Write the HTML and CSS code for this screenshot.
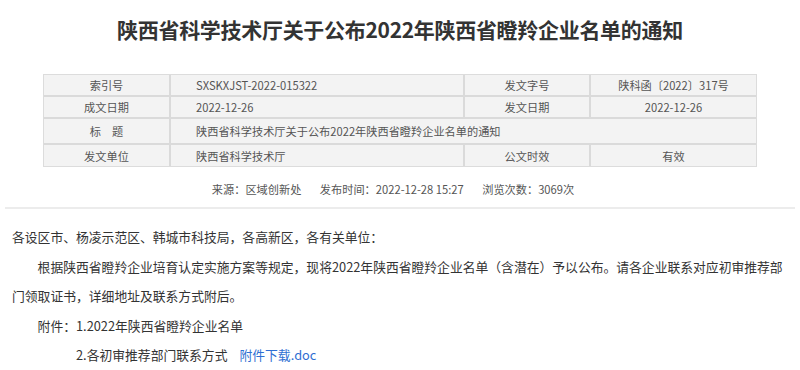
FILE: index.html
```html
<!DOCTYPE html>
<html lang="zh-CN">
<head>
<meta charset="utf-8">
<title>陕西省科学技术厅关于公布2022年陕西省瞪羚企业名单的通知</title>
<link rel="stylesheet" href="styles.css">
</head>
<body>
<div class="page">
  <h1 class="title">陕西省科学技术厅关于公布2022年陕西省瞪羚企业名单的通知</h1>
  <table class="info">
    <colgroup>
      <col class="k1">
      <col class="k2">
      <col class="k3">
      <col class="k4">
    </colgroup>
    <tr>
      <td class="label">索引号</td>
      <td class="value">SXSKXJST-2022-015322</td>
      <td class="label">发文字号</td>
      <td class="label">陕科函〔2022〕317号</td>
    </tr>
    <tr>
      <td class="label">成文日期</td>
      <td class="value">2022-12-26</td>
      <td class="label">发文日期</td>
      <td class="label">2022-12-26</td>
    </tr>
    <tr class="tall">
      <td class="label">标　题</td>
      <td class="value" colspan="3">陕西省科学技术厅关于公布2022年陕西省瞪羚企业名单的通知</td>
    </tr>
    <tr class="last">
      <td class="label">发文单位</td>
      <td class="value">陕西省科学技术厅</td>
      <td class="label">公文时效</td>
      <td class="label">有效</td>
    </tr>
  </table>
  <div class="meta">
    <span>来源：区域创新处</span>
    <span>发布时间：2022-12-28 15:27</span>
    <span>浏览次数：3069次</span>
  </div>
  <div class="content">
    <p class="salute">各设区市、杨凌示范区、韩城市科技局，各高新区，各有关单位：</p>
    <p class="indent">根据陕西省瞪羚企业培育认定实施方案等规定，现将2022年陕西省瞪羚企业名单（含潜在）予以公布。请各企业联系对应初审推荐部门领取证书，详细地址及联系方式附后。</p>
    <p class="indent">附件：1.2022年陕西省瞪羚企业名单</p>
    <p class="attach2">2.各初审推荐部门联系方式<a class="link" href="#">附件下载.doc</a></p>
  </div>
</div>
</body>
</html>
```

FILE: styles.css
```css
html, body {
  margin: 0;
  padding: 0;
  background: #ffffff;
}
body {
  font-family: "Noto Sans CJK SC", "Noto Sans", sans-serif;
  color: #333333;
}
.page {
  width: 800px;
}
.title {
  margin: 0;
  padding-top: 14px;
  height: 60px;
  box-sizing: border-box;
  text-align: center;
  font-size: 21px;
  line-height: 30px;
  font-weight: bold;
  color: #333333;
  letter-spacing: -0.3px;
}
.info {
  margin: 0 auto;
  width: 714px;
  margin-top: 14px;
  border-collapse: separate;
  border-spacing: 0;
  border: 1px solid #dcdcdc;
  background: #f3f3f3;
  font-size: 11.2px;
  color: #555555;
  table-layout: fixed;
}
.k1 { width: 127px; }
.k2 { width: 294px; }
.k3 { width: 126px; }
.k4 { width: 165px; }
.info td {
  height: 21px;
  padding: 0;
  line-height: 20px;
  border-right: 2px solid #dadada;
  border-bottom: 2px solid #dadada;
  white-space: nowrap;
  box-sizing: border-box;
}
.info td:last-child {
  border-right: 0;
}
.info tr.last td {
  border-bottom: 0;
}
.info tr.tall td {
  height: 26px;
}
.label {
  text-align: center;
}
.value {
  text-align: left;
  padding-left: 25px !important;
}
.meta {
  margin-top: 12px;
  height: 28px;
  line-height: 20px;
  text-align: center;
  font-size: 11.2px;
  color: #555555;
  padding-right: 14px;
  border-bottom: 2px solid #ececec;
  margin-left: 5px;
  margin-right: 5px;
}
.meta span {
  margin: 0 8px;
}
.content {
  padding: 13px 14px 0 12px;
  font-size: 12.8px;
  line-height: 29.5px;
  color: #333333;
}
.content p {
  margin: 0;
}
.indent {
  text-indent: 2em;
}
.attach2 {
  padding-left: 64px;
}
.link {
  color: #2f6fd2;
  text-decoration: none;
  margin-left: 12px;
}
```
